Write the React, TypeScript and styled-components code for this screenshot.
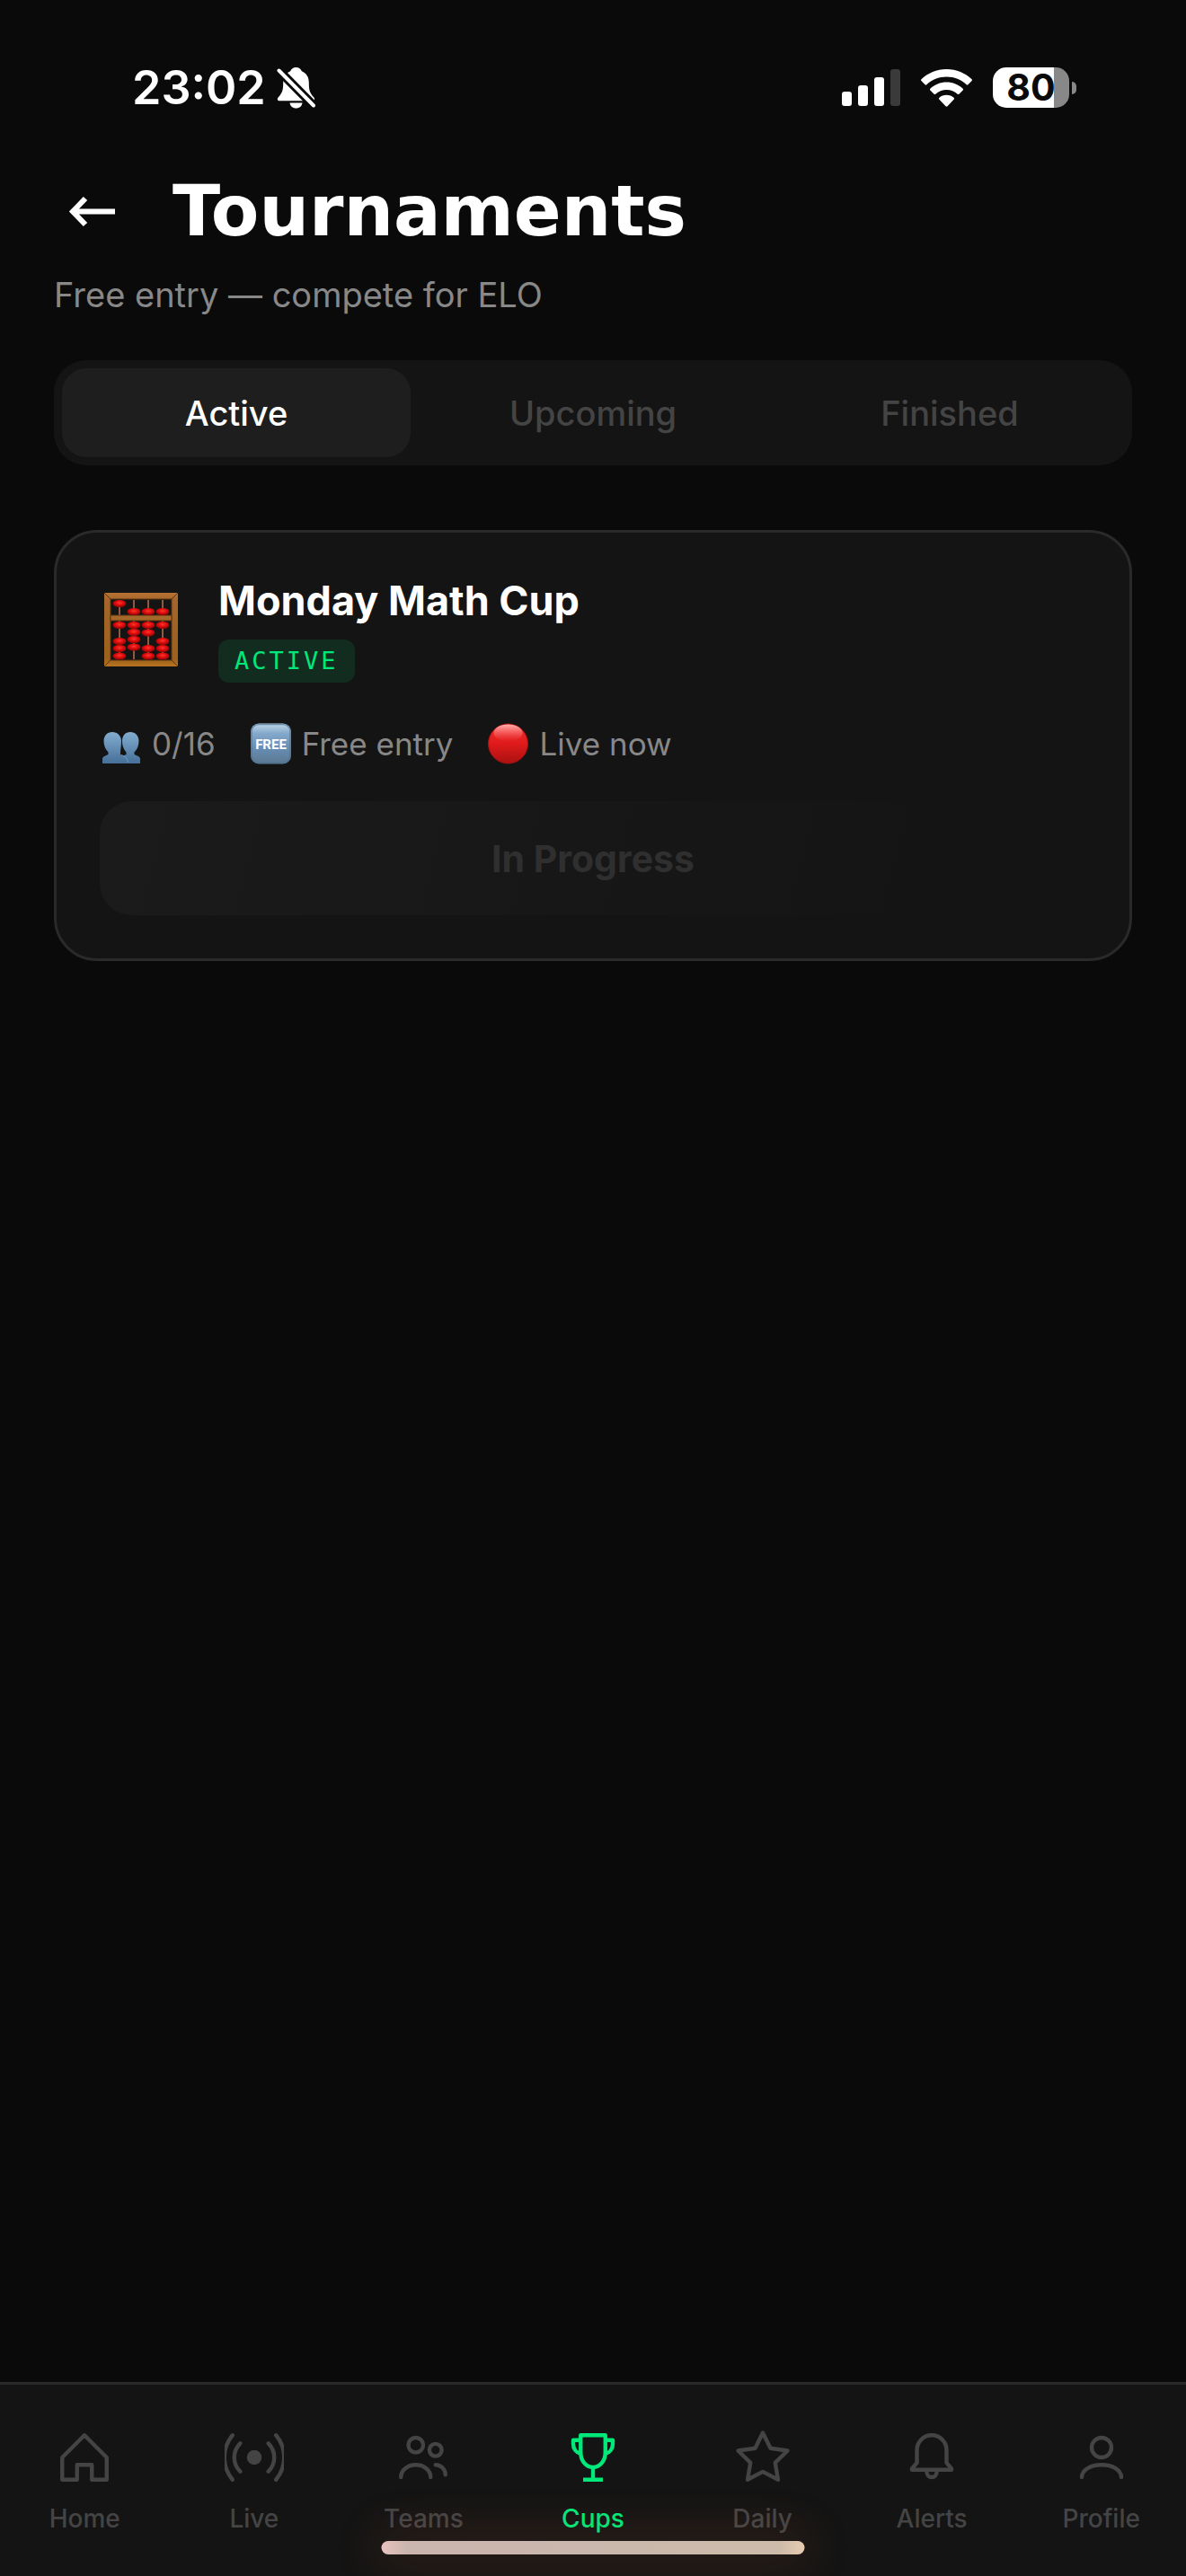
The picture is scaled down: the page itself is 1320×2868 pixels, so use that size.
import React, { useState } from 'react';
import styled, { createGlobalStyle } from 'styled-components';

const color = {
  page: '#0a0a0a',
  surface: '#141414',
  raised: '#1e1e1e',
  line: '#2a2a2a',
  text: '#ffffff',
  muted: '#888888',
  faint: '#444444',
  accent: '#00e87a',
};

const GlobalStyle = createGlobalStyle`
  *, *::before, *::after { box-sizing: border-box; }
  body {
    margin: 0;
    background: ${color.page};
    color: ${color.text};
    font-family: Inter, "Liberation Sans", sans-serif;
  }
  button { font: inherit; color: inherit; border: 0; background: none; padding: 0; cursor: pointer; }
  h1, h2, p, ul { margin: 0; padding: 0; }
  svg { display: block; flex: none; }
`;

const Screen = styled.div`
  display: flex;
  flex-direction: column;
  min-height: 100vh;
`;

const StatusBar = styled.div`
  display: flex;
  align-items: center;
  justify-content: space-between;
  height: 177px;
  padding: 18px 122px 0 147px;
`;

const StatusGroup = styled.div<{ $gap: number }>`
  display: flex;
  align-items: center;
  gap: ${(p) => p.$gap}px;
`;

const Clock = styled.span`
  font-size: 52px;
  font-weight: 600;
  line-height: 64px;
`;

const Battery = styled.div`
  display: flex;
  align-items: center;
  gap: 3px;
`;

const BatteryBody = styled.div<{ $level: number }>`
  width: 85px;
  height: 45px;
  border-radius: 15px;
  background: linear-gradient(to right, #fff ${(p) => p.$level}%, #888 ${(p) => p.$level}%);
  color: ${color.page};
  font-size: 41px;
  font-weight: 700;
  line-height: 45px;
  text-align: center;
`;

const BatteryTip = styled.div`
  width: 5px;
  height: 14px;
  border-radius: 0 7px 7px 0;
  background: #888;
`;

const Main = styled.main`
  flex: 1;
  padding: 14px 60px 48px;
`;

const TitleRow = styled.div`
  display: flex;
  align-items: center;
  gap: 48px;
  height: 88px;
`;

const BackButton = styled.button`
  display: grid;
  place-items: center;
  width: 84px;
  height: 84px;
`;

const Title = styled.h1`
  font-family: "DejaVu Sans", sans-serif;
  font-size: 78px;
  font-weight: 700;
  line-height: 86px;
`;

const Subtitle = styled.p`
  margin-top: 24px;
  color: ${color.muted};
  font-size: 38px;
  line-height: 50px;
`;

const TabList = styled.div`
  display: grid;
  grid-template-columns: repeat(3, 1fr);
  gap: 9px;
  margin-top: 48px;
  padding: 9px;
  border-radius: 36px;
  background: ${color.surface};
`;

const Tab = styled.button<{ $active: boolean }>`
  height: 99px;
  border-radius: 27px;
  background: ${(p) => (p.$active ? color.raised : 'transparent')};
  color: ${(p) => (p.$active ? color.text : color.faint)};
  font-size: 38px;
  font-weight: 500;
`;

const Card = styled.article`
  margin-top: 72px;
  padding: 48px;
  border: 3px solid ${color.line};
  border-radius: 48px;
  background: ${color.surface};
`;

const CardHead = styled.div`
  display: flex;
  align-items: center;
  gap: 36px;
`;

const CardInfo = styled.div`
  display: flex;
  flex-direction: column;
  align-items: flex-start;
  gap: 15px;
`;

const CardTitle = styled.h2`
  font-size: 45px;
  font-weight: 700;
  line-height: 56px;
`;

const Badge = styled.span`
  padding: 0 18px;
  border-radius: 12px;
  background: #122c20;
  color: ${color.accent};
  font-family: "DejaVu Sans Mono", monospace;
  font-size: 27px;
  line-height: 48px;
  letter-spacing: 3px;
`;

const MetaList = styled.ul`
  display: flex;
  gap: 38px;
  margin: 36px 0 32px;
  list-style: none;
`;

const MetaItem = styled.li`
  display: flex;
  align-items: center;
  gap: 12px;
  color: ${color.muted};
  font-size: 35px;
  line-height: 64px;
`;

const ActionButton = styled.button`
  width: 100%;
  height: 127px;
  border-radius: 36px;
  background: linear-gradient(105deg, #1b1b1b, ${color.surface} 85%);
  color: #2f2f2f;
  font-size: 41px;
  font-weight: 700;
  cursor: default;
`;

const BottomNav = styled.nav`
  position: sticky;
  bottom: 0;
  height: 216px;
  border-top: 3px solid ${color.line};
  background: ${color.surface};
  overflow: hidden;
`;

const NavList = styled.ul`
  display: grid;
  grid-template-columns: repeat(7, 1fr);
  padding-top: 48px;
  list-style: none;
`;

const NavLink = styled.a<{ $active: boolean }>`
  display: flex;
  flex-direction: column;
  align-items: center;
  gap: 17px;
  color: ${(p) => (p.$active ? color.accent : color.faint)};
  font-size: 28px;
  font-weight: 500;
  line-height: 36px;
  text-decoration: none;
`;

const HomeIndicator = styled.div`
  position: absolute;
  bottom: 24px;
  left: 50%;
  width: 471px;
  height: 15px;
  border-radius: 8px;
  transform: translateX(-50%);
  background: linear-gradient(to right, #e8c3be, #cbb5af 6%, #cab7ad 50%, #cdbbaa 94%, #e7cbb0);
  box-shadow: 0 0 54px 9px rgba(255, 130, 80, 0.14);
`;

const SilentIcon = () => (
  <svg width="43" height="48" viewBox="0 0 43 48" fill="#fff" aria-hidden="true">
    <path d="M21.5 1c-3.2 0-5.4 1.7-6.3 4.3C9.5 7.6 7.2 12.5 7.2 18c0 9-1.2 11.5-5.2 16-2 2.400-1.200 4.300 1.200 4.300h36.600c2.400 0 3.200-1.900 1.200-4.300-4-4.500-5.200-7-5.200-16 0-5.500-2.300-10.400-8-12.700C26.900 2.700 24.700 1 21.500 1z" />
    <path d="M14.5 40.5h14c-.4 3.700-3.300 6-7 6s-6.600-2.300-7-6z" />
    <path d="M2 4l39.5 40" stroke={color.page} strokeWidth="10" />
    <path d="M2.5 4.5L41 43.5" stroke="#fff" strokeWidth="4" strokeLinecap="round" />
  </svg>
);

const SignalIcon = () => (
  <svg width="65" height="41" viewBox="0 0 65 41" fill="#fff" aria-hidden="true">
    <rect y="25" width="11" height="16" rx="3" />
    <rect x="18" y="18" width="11" height="23" rx="3" />
    <rect x="36" y="9" width="11" height="32" rx="3" />
    <rect x="54" width="11" height="41" rx="3" fill="#3a3a3a" />
  </svg>
);

const WifiIcon = () => (
  <svg width="57" height="42" viewBox="0 0 57 42" fill="#fff" aria-hidden="true">
    <path d="M28.5 0C17.5 0 7.7 4.3.4 11.3c-.5.5-.5 1.1 0 1.6l4.2 4.4c.5.5 1.2.5 1.7 0C12.1 11.8 19.9 8.5 28.5 8.5s16.4 3.3 22.2 8.8c.5.5 1.2.5 1.7 0l4.2-4.4c.5-.5.5-1.1 0-1.6C49.3 4.3 39.5 0 28.5 0z" />
    <path d="M28.5 14.5c-7 0-13.4 2.7-18.2 7.2-.5.5-.5 1.2 0 1.7l4.3 4.3c.5.5 1.2.5 1.7.1 3.2-3 7.5-4.8 12.2-4.8s9 1.8 12.2 4.8c.5.4 1.2.4 1.7-.1l4.3-4.3c.5-.5.5-1.2 0-1.7-4.8-4.5-11.2-7.2-18.2-7.2z" />
    <path d="M28.5 28.7c-3.2 0-6.1 1.2-8.3 3.2-.5.5-.5 1.1 0 1.6l7.3 7.7c.6.6 1.4.6 2 0l7.3-7.7c.5-.5.5-1.1 0-1.6-2.2-2-5.1-3.2-8.3-3.2z" />
  </svg>
);

const BackIcon = () => (
  <svg width="54" height="40" viewBox="0 0 54 40" fill="none" stroke="#fff" strokeWidth="6" aria-hidden="true">
    <path d="M6 20.5H53M20 6L6 20.5 20 35" />
  </svg>
);

const beadColumns = [
  { x: 17, beads: [12, 36, 54, 62, 70.5] },
  { x: 33, beads: [21, 36, 44, 52, 60.5] },
  { x: 49, beads: [21, 36, 44.5, 62, 70.5] },
  { x: 65, beads: [21, 36, 54, 62, 70.5] },
];

const AbacusIcon = () => (
  <svg width="96" height="96" viewBox="-5 -7 96 96" role="img" aria-label="Abacus">
    <defs>
      <linearGradient id="wood" x1="0" y1="0" x2="0" y2="1">
        <stop offset="0" stopColor="#b87333" />
        <stop offset="0.1" stopColor="#a5652b" />
        <stop offset="0.9" stopColor="#9c611c" />
        <stop offset="1" stopColor="#b87420" />
      </linearGradient>
      <radialGradient id="bead" cx="0.5" cy="0.4" r="0.6">
        <stop offset="0" stopColor="#ff3530" />
        <stop offset="0.5" stopColor="#df0c0c" />
        <stop offset="1" stopColor="#850505" />
      </radialGradient>
    </defs>
    <path fill="url(#wood)" fillRule="evenodd" d="M0 0h82v82H0zM7 7v68h68V7z" />
    <path fill="none" stroke="#5b3510" strokeWidth="1" d="M7 7h68v68H7zM0 0l7 7M82 0l-7 7M0 82l7-7M82 82l-7-7" />
    {beadColumns.map((c) => (
      <path key={c.x} d={`M${c.x} 8V74`} stroke="#8f5a44" strokeWidth="2" />
    ))}
    <path fill="#a5682a" stroke="#5b3510" strokeWidth="1" d="M7 25h68v6H7z" />
    {beadColumns.map((c) =>
      c.beads.map((y) => <ellipse key={`${c.x}-${y}`} cx={c.x} cy={y} rx="7.4" ry="4.1" fill="url(#bead)" />),
    )}
  </svg>
);

const PeopleEmoji = () => (
  <svg width="46" height="46" viewBox="0 0 46 46" aria-hidden="true">
    <defs>
      <linearGradient id="people" x1="0" y1="0" x2="0" y2="1">
        <stop offset="0" stopColor="#83adcf" />
        <stop offset="1" stopColor="#466f99" />
      </linearGradient>
    </defs>
    <g fill="url(#people)">
      <path d="M34 10c-5.500 0-9 4-9 10 0 6 2.300 10 4.500 12.500V35c-3 1.500-6.500 1.500-7.500 5v5h23v-5c0-3-3.500-3.500-6.500-5v-2.500c3-3 5-7 5-12.500 0-6-4-10-9.500-10z" />
      <path d="M14 10c-5.500 0-9.500 4-9.500 10 0 5.500 2 9.500 5 12.500V35c-3 1.500-6.500 2-6.500 5v5h28v-3c-1.500-4-5-5-8-7v-2.500C23 30 24 26 24 20c0-6-4.500-10-10-10z" />
    </g>
    <path d="M24 35.500c4 1.500 6.500 3 7.500 8" fill="none" stroke="#74a0c6" strokeWidth="1" />
  </svg>
);

const FreeEmoji = () => (
  <svg width="46" height="46" viewBox="0 0 46 46" aria-hidden="true">
    <defs>
      <linearGradient id="free" x1="0" y1="0" x2="0" y2="1">
        <stop offset="0" stopColor="#c3d7e7" />
        <stop offset="0.25" stopColor="#83a8cb" />
        <stop offset="0.65" stopColor="#668bb0" />
        <stop offset="1" stopColor="#5c788f" />
      </linearGradient>
    </defs>
    <rect x="1" y="0.5" width="45" height="45" rx="9" fill="url(#free)" />
    <rect x="2" y="1.5" width="43" height="43" rx="8" fill="none" stroke="#4c7193" strokeWidth="1.5" opacity="0.7" />
    <text x="23.5" y="28.5" fill="#fff" fontFamily="Roboto, sans-serif" fontSize="15" fontWeight="700" textAnchor="middle">
      FREE
    </text>
  </svg>
);

const LiveEmoji = () => (
  <svg width="46" height="46" viewBox="0 0 46 46" aria-hidden="true">
    <defs>
      <linearGradient id="live" x1="0" y1="0" x2="0" y2="1">
        <stop offset="0" stopColor="#f23030" />
        <stop offset="0.5" stopColor="#df1a1a" />
        <stop offset="1" stopColor="#ab1111" />
      </linearGradient>
      <linearGradient id="gloss" x1="0" y1="0" x2="0" y2="1">
        <stop offset="0" stopColor="#ffb0b0" />
        <stop offset="1" stopColor="#ff6060" stopOpacity="0" />
      </linearGradient>
    </defs>
    <circle cx="23.5" cy="23" r="22" fill="url(#live)" stroke="#a81010" strokeWidth="1" />
    <ellipse cx="23.5" cy="11" rx="16" ry="9.5" fill="url(#gloss)" />
  </svg>
);

const navIcons: Record<string, React.ReactNode> = {
  Home: <path d="M3 12l9-9 9 9v9h-6v-6H9v6H3z" />,
  Live: (
    <>
      <circle cx="12" cy="12" r="3" fill="currentColor" stroke="none" />
      <path d="M6.3 6.3a8 8 0 0 0 0 11.4M17.7 6.3a8 8 0 0 1 0 11.4M3.2 3a14 14 0 0 0 0 18M20.8 3a14 14 0 0 1 0 18" />
    </>
  ),
  Teams: (
    <>
      <circle cx="9" cy="7" r="3" />
      <circle cx="17" cy="9" r="2.5" />
      <path d="M3 20c0-2.8 2.7-5 6-5s6 2.2 6 5M17 15c2.2 0 4 1.8 4 4" />
    </>
  ),
  Cups: (
    <path
      strokeLinecap="butt"
      d="M7 3h10v7c0 3.3-2.2 6-5 6s-5-2.7-5-6zM7 5H4v1.500c0 2 1.200 3.500 3 4M17 5h3v1.500c0 2-1.200 3.500-3 4M12 16v5M8 21h8"
    />
  ),
  Daily: <path d="M12 2l3.090 6.260L22 9.270l-5 4.870 1.180 6.880L12 17.770l-6.180 3.250L7 14.140 2 9.270l6.910-1.010z" />,
  Alerts: <path d="M12 3a6 6 0 0 0-6 6v5.2l-2 2.3v.5h16v-.5l-2-2.3V9a6 6 0 0 0-6-6zM10 18a2 2 0 0 0 4 0" />,
  Profile: (
    <>
      <circle cx="12" cy="8" r="4" />
      <path d="M4 20c0-3 3.6-5 8-5s8 2 8 5" />
    </>
  ),
};

const NavIcon = ({ name }: { name: string }) => (
  <svg
    width="66"
    height="66"
    viewBox="0 0 24 24"
    fill="none"
    stroke="currentColor"
    strokeWidth="1.6"
    strokeLinecap="round"
    strokeLinejoin="round"
    aria-hidden="true"
  >
    {navIcons[name]}
  </svg>
);

const tabs = ['Active', 'Upcoming', 'Finished'];

export default function App() {
  const [tab, setTab] = useState('Active');

  return (
    <Screen>
      <GlobalStyle />
      <StatusBar>
        <StatusGroup $gap={12}>
          <Clock>23:02</Clock>
          <SilentIcon />
        </StatusGroup>
        <StatusGroup $gap={23}>
          <SignalIcon />
          <WifiIcon />
          <Battery>
            <BatteryBody $level={80}>80</BatteryBody>
            <BatteryTip />
          </Battery>
        </StatusGroup>
      </StatusBar>

      <Main>
        <TitleRow>
          <BackButton aria-label="Back">
            <BackIcon />
          </BackButton>
          <Title>Tournaments</Title>
        </TitleRow>
        <Subtitle>Free entry — compete for ELO</Subtitle>

        <TabList role="tablist">
          {tabs.map((name) => (
            <Tab key={name} role="tab" aria-selected={tab === name} $active={tab === name} onClick={() => setTab(name)}>
              {name}
            </Tab>
          ))}
        </TabList>

        <Card>
          <CardHead>
            <AbacusIcon />
            <CardInfo>
              <CardTitle>Monday Math Cup</CardTitle>
              <Badge>ACTIVE</Badge>
            </CardInfo>
          </CardHead>
          <MetaList>
            <MetaItem>
              <PeopleEmoji />
              0/16
            </MetaItem>
            <MetaItem>
              <FreeEmoji />
              Free entry
            </MetaItem>
            <MetaItem>
              <LiveEmoji />
              Live now
            </MetaItem>
          </MetaList>
          <ActionButton disabled>In Progress</ActionButton>
        </Card>
      </Main>

      <BottomNav aria-label="Main">
        <NavList>
          {Object.keys(navIcons).map((name) => (
            <li key={name}>
              <NavLink href={`#${name.toLowerCase()}`} $active={name === 'Cups'} aria-current={name === 'Cups' ? 'page' : undefined}>
                <NavIcon name={name} />
                {name}
              </NavLink>
            </li>
          ))}
        </NavList>
        <HomeIndicator />
      </BottomNav>
    </Screen>
  );
}
